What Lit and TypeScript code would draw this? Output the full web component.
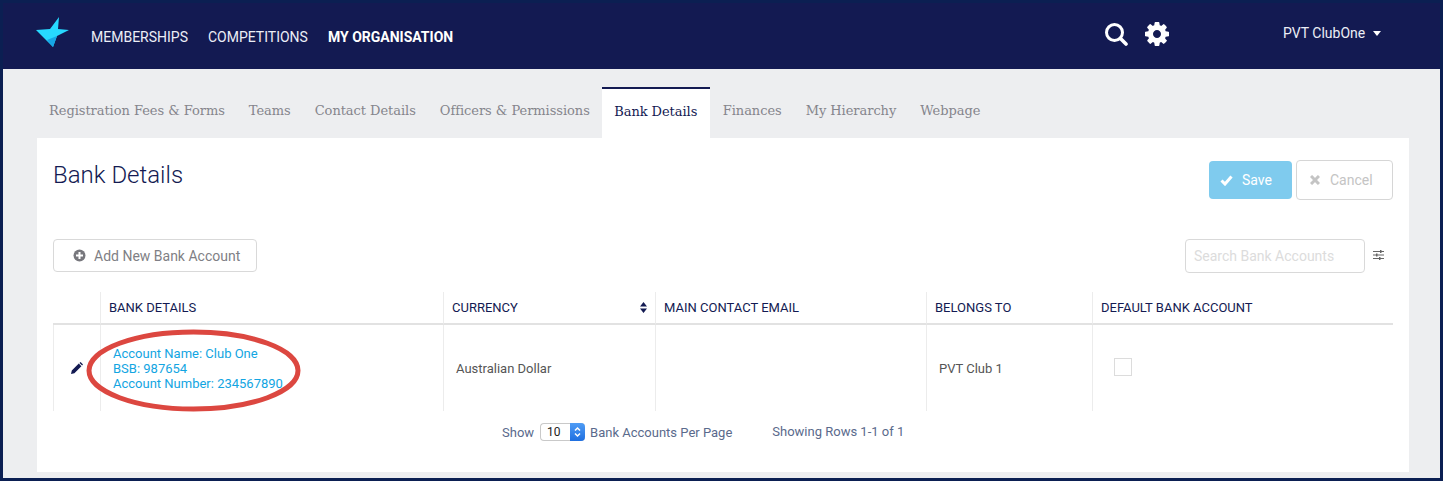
import { LitElement, html, css, svg } from 'lit';
import { customElement } from 'lit/decorators.js';

const COG = 'M1024 768q0-106-75-181t-181-75-181 75-75 181 75 181 181 75 181-75 75-181zm512-109v222q0 12-8 23t-20 13l-185 28q-19 54-39 91 35 50 107 138 10 12 10 25t-9 23q-27 37-99 108t-94 71q-12 0-26-9l-138-108q-44 23-91 38-16 136-29 186-7 28-36 28h-222q-14 0-24.5-8.5t-11.5-21.5l-28-184q-49-16-90-37l-141 107q-10 9-25 9-14 0-25-11-126-114-165-168-7-10-7-23 0-12 8-23 15-21 51-66.5t54-70.5q-27-50-41-99l-183-27q-13-2-21-12.5t-8-23.5v-222q0-12 8-23t19-13l186-28q14-46 39-92-40-57-107-138-10-12-10-24 0-10 9-23 26-36 98.5-107.5t94.5-71.5q13 0 26 10l138 107q44-23 91-38 16-136 29-186 7-28 36-28h222q14 0 24.5 8.5t11.5 21.5l28 184q49 16 90 37l142-107q9-9 24-9 13 0 25 10 129 119 165 170 7 8 7 22 0 12-8 23-15 21-51 66.5t-54 70.5q26 50 41 98l183 28q13 2 21 12.5t8 23.5z';

const TABS = ['Registration Fees & Forms', 'Teams', 'Contact Details', 'Officers & Permissions', 'Bank Details', 'Finances', 'My Hierarchy', 'Webpage'];

@customElement('app-root')
export class AppRoot extends LitElement {
  static styles = css`
    :host {
      display: block;
      box-sizing: border-box;
      height: 481px;
      padding: 3px;
      background: #0b1f52;
      font-family: Roboto, sans-serif;
      font-size: 13px;
      overflow: hidden;
    }
    svg { display: block; }
    .nav {
      display: flex;
      align-items: center;
      height: 66px;
      background: #131a52;
      color: #eceef6;
      font-size: 14px;
    }
    .logo { margin: -6px 0 0 33px; }
    .menu { display: flex; gap: 20px; margin: 2px 0 0 21px; }
    .menu .on { color: #fff; font-weight: 700; }
    .icons { display: flex; align-items: center; gap: 17px; margin: -5px 0 0 auto; }
    .user { display: flex; align-items: center; gap: 8px; width: 157px; margin: -6px 0 0 114px; font-size: 14px; }
    .caret { border: 4px solid transparent; border-top: 5px solid #fff; border-bottom: 0; }
    .main {
      display: flex;
      flex-direction: column;
      height: 409px;
      background: #edeef0;
    }
    .tabs { display: flex; height: 51px; margin: 18px 0 0 34px; }
    .tab {
      padding: 0 12px;
      line-height: 47px;
      font-family: 'DejaVu Serif', serif;
      font-size: 13px;
      letter-spacing: -0.05px;
      color: #85858c;
    }
    .tab.on {
      box-sizing: border-box;
      width: 108px;
      margin-right: 1px;
      padding: 0;
      background: #fff;
      color: #131a52;
      border-top: 2px solid #131a52;
      line-height: 45px;
      text-align: center;
    }
    .card {
      position: relative;
      height: 334px;
      margin: 0 31px 0 34px;
      padding: 0 16px;
      background: #fff;
    }
    .head { display: flex; align-items: flex-start; height: 101px; }
    h2 { margin: 22px 0 0; font-size: 24px; font-weight: 300; line-height: 30px; color: #131a52; }
    .actions { display: flex; gap: 4px; margin: 22px 0 0 auto; }
    .btn { display: flex; align-items: center; box-sizing: border-box; border-radius: 4px; font-size: 14px; }
    .save { height: 38px; width: 83px; margin-top: 1px; padding-left: 11px; gap: 9px; background: #7fcbee; color: #fff; }
    .cancel { height: 40px; width: 97px; padding-left: 13px; gap: 10px; border: 1px solid #d6d6d6; color: #c4c4c4; }
    .tools { display: flex; align-items: flex-start; height: 53px; }
    .add { height: 33px; width: 204px; padding-left: 19px; gap: 8px; border: 1px solid #d9d9d9; color: #7f7f85; }
    .search {
      box-sizing: border-box;
      width: 180px;
      height: 34px;
      margin-left: auto;
      padding-left: 8px;
      border: 1px solid #d9d9d9;
      border-radius: 4px;
      line-height: 32px;
      font-size: 14px;
      color: #dcdcdc;
    }
    .filter { margin: 10px 9px 0 8px; }
    .grid {
      display: grid;
      grid-template-columns: 47px 343px 212px 271px 166px 301px;
      grid-template-rows: 33px 86px;
    }
    .th, .td { box-sizing: border-box; border-left: 1px solid #ececec; }
    .th {
      display: flex;
      align-items: center;
      justify-content: space-between;
      padding: 0 8px;
      border-bottom: 2px solid #e2e2e2;
      color: #131a52;
      font-size: 13px;
    }
    .th:first-child, .td:first-child { border-left: 0; }
    .td { display: flex; align-items: center; padding: 0 12px; color: #555; }
    .td.edit { padding: 0 0 0 17px; }
    .links { color: #12a5e2; line-height: 15px; }
    .check { width: 18px; height: 18px; margin: -2px 0 0 9px; box-sizing: border-box; border: 1px solid #dcdcdc; }
    .foot { display: flex; align-items: center; margin-top: 12px; color: #5a6a8c; font-size: 13px; }
    .show { margin-left: 449px; }
    .select {
      display: flex;
      justify-content: space-between;
      box-sizing: border-box;
      width: 45px;
      height: 18px;
      margin: 0 5px 0 6px;
      border: 1px solid #c9c9c9;
      border-right: 0;
      border-radius: 4px;
      background: #fff;
      color: #222;
      font-size: 12px;
      line-height: 16px;
      padding-left: 6px;
    }
    .stepper {
      width: 15px;
      height: 18px;
      margin-top: -1px;
      border-radius: 0 4px 4px 0;
      background: linear-gradient(#4f9cf5, #1f6fe0);
    }
    .rows { margin: -1px 0 0 40px; }
    .ring { position: absolute; left: 49px; top: 191px; }
  `;

  render() {
    return html`
      <div class="nav">
        <svg class="logo" width="34" height="32" viewBox="0 0 34 32">
          <path d="M0 13 14 12 23 0 22 12 33 13 21 19 17 30Z" fill="#27d9ff" />
          <path d="M17 30 11 23 21 19Z" fill="#16a6e6" />
        </svg>
        <div class="menu">
          <span>MEMBERSHIPS</span><span>COMPETITIONS</span><span class="on">MY ORGANISATION</span>
        </div>
        <div class="icons">
          <svg width="24" height="24" viewBox="0 0 24 24" fill="none" stroke="#fff">
            <circle cx="10.5" cy="10.5" r="8" stroke-width="3" />
            <path d="M16.5 16.5 22 22" stroke-width="3.6" stroke-linecap="round" />
          </svg>
          <svg width="24" height="24" viewBox="0 0 1536 1536" fill="#fff"><path d=${COG} /></svg>
        </div>
        <div class="user">PVT ClubOne <span class="caret"></span></div>
      </div>
      <div class="main">
        <div class="tabs">
          ${TABS.map((t) => html`<div class="tab ${t === 'Bank Details' ? 'on' : ''}">${t}</div>`)}
        </div>
        <div class="card">
          <div class="head">
            <h2>Bank Details</h2>
            <div class="actions">
              <div class="btn save">
                <svg width="13" height="11" viewBox="0 0 13 11" fill="none" stroke="#fff" stroke-width="3"><path d="M1.5 5.5 5 9 11.5 1.5" /></svg>
                Save
              </div>
              <div class="btn cancel">
                <svg width="10" height="10" viewBox="0 0 10 10" fill="none" stroke="#c4c4c4" stroke-width="3"><path d="M1 1 9 9M9 1 1 9" /></svg>
                Cancel
              </div>
            </div>
          </div>
          <div class="tools">
            <div class="btn add">
              <svg width="13" height="13" viewBox="0 0 13 13">
                <circle cx="6.5" cy="6.5" r="6" fill="#77777d" />
                <path d="M6.5 3v7M3 6.5h7" stroke="#fff" stroke-width="2" />
              </svg>
              Add New Bank Account
            </div>
            <div class="search">Search Bank Accounts</div>
            <svg class="filter" width="11" height="12" viewBox="0 0 11 12" fill="#666">
              <path d="M0 2h11v1H0zM0 5.500h11v1H0zM0 9h11v1H0z" />
              <path d="M7 1h1.500v3H7zM3 4.500h1.500v3H3zM6 8h1.500v3H6z" />
            </svg>
          </div>
          <div class="grid">
            <div class="th"></div>
            <div class="th">BANK DETAILS</div>
            <div class="th">CURRENCY
              <svg width="7" height="11" viewBox="0 0 7 11" fill="#131a52"><path d="M3.500 0 7 4.500H0ZM0 6.500H7L3.500 11Z" /></svg>
            </div>
            <div class="th">MAIN CONTACT EMAIL</div>
            <div class="th">BELONGS TO</div>
            <div class="th">DEFAULT BANK ACCOUNT</div>

            <div class="td edit">
              <svg width="12" height="12" viewBox="0 0 12 12" fill="#131a52"><path d="M0 12 .8 8.600 7.800 1.600 10.400 4.200 3.400 11.200ZM8.500.9 9.200.2Q9.500 0 9.800.2L11.800 2.200Q12 2.500 11.800 2.800L11.100 3.500Z" /></svg>
            </div>
            <div class="td links"><div>Account Name: Club One<br />BSB: 987654<br />Account Number: 234567890</div></div>
            <div class="td">Australian Dollar</div>
            <div class="td"></div>
            <div class="td">PVT Club 1</div>
            <div class="td"><div class="check"></div></div>
          </div>
          <div class="foot">
            <span class="show">Show</span>
            <div class="select">10
              <div class="stepper">
                <svg width="15" height="18" viewBox="0 0 15 18" fill="none" stroke="#fff" stroke-width="1.500"><path d="M5 7.500 7.500 5 10 7.500M5 10.500 7.500 13 10 10.500" /></svg>
              </div>
            </div>
            <span>Bank Accounts Per Page</span>
            <span class="rows">Showing Rows 1-1 of 1</span>
          </div>
          ${this.ring()}
        </div>
      </div>
    `;
  }

  ring() {
    return svg`<svg class="ring" width="216" height="84" viewBox="0 0 216 84" fill="none">
      <ellipse cx="107.500" cy="41.500" rx="104.500" ry="38.500" stroke="#dc4740" stroke-width="5" />
    </svg>`;
  }
}
